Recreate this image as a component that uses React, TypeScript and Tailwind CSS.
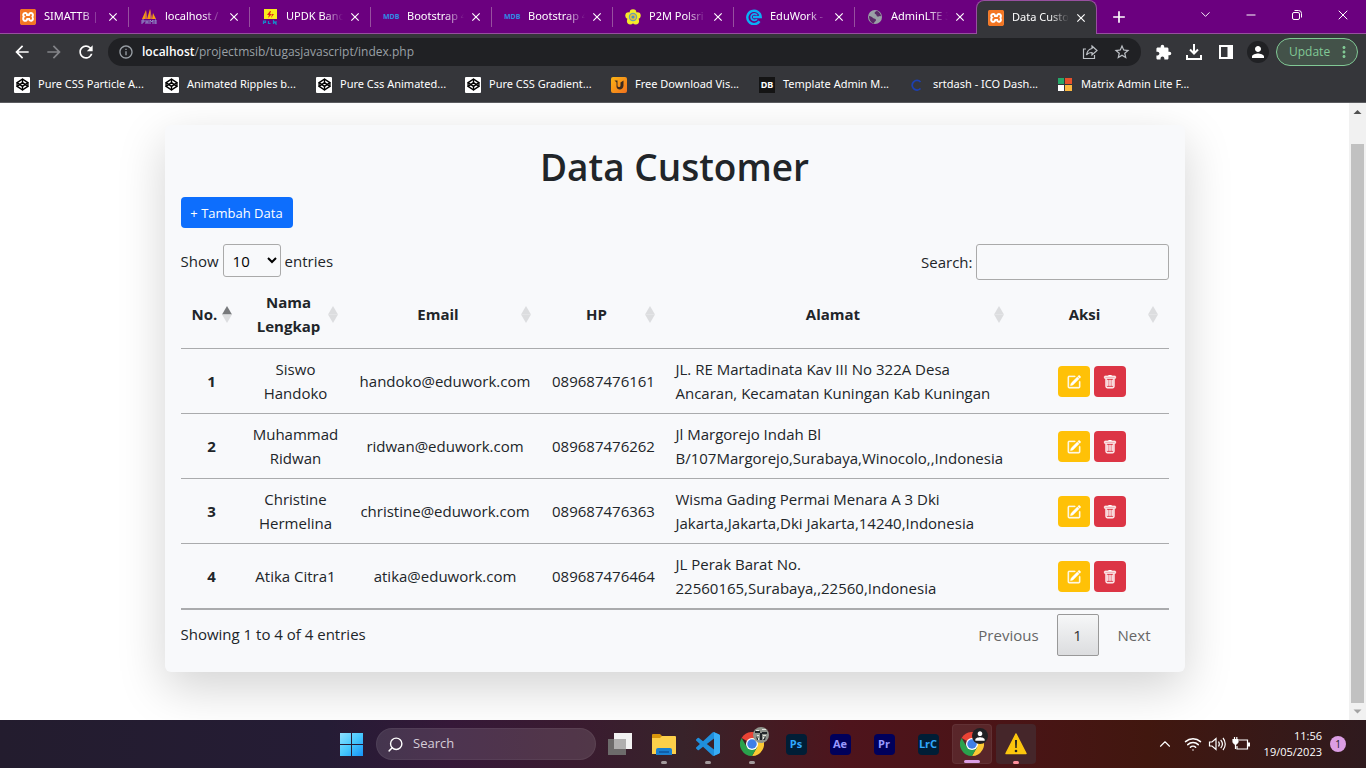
import React from "react";
import { SiXampp } from "react-icons/si";
import { FiCodepen } from "react-icons/fi";
import { BsPencilSquare, BsTrash } from "react-icons/bs";
import {
  MdArrowBack,
  MdArrowForward,
  MdRefresh,
  MdInfoOutline,
  MdStarBorder,
  MdExtension,
  MdPerson,
  MdMoreVert,
  MdClose,
  MdAdd,
} from "react-icons/md";
import { Search, ChevronDown, ChevronUp, Wifi, Minus, X } from "lucide-react";

const Xampp = () => (
  <span className="block size-4 rounded-sm bg-white">
    <SiXampp className="size-4 text-[#f37623]" />
  </span>
);

const Mdb = () => (
  <span className="block w-4 text-center text-[7px] leading-4 font-bold text-[#2f8be6]">MDB</span>
);

const PhpMyAdmin = () => (
  <svg viewBox="0 0 16 16" className="size-4">
    <path d="M1 10 5 1l1 9zM6 10 9 0l2 10zM11 10l1-6 3 6z" fill="#f89c0e" />
    <path d="M5 1l1 9H4zM9 0l2 10H9z" fill="#c9665c" />
    <path d="M1 15v-4h2v2H1m4-2v4m0-2h2m0-2v4m2 0v-4l2 2 1-2v4m2 0v-4h1v4" stroke="#8f8fc8" fill="none" />
  </svg>
);

const Pln = () => (
  <svg viewBox="0 0 16 16" className="size-4">
    <rect x="2" width="13" height="10" fill="#f8ee1c" />
    <path d="M8 2 5 6h2l-1 3 4-4H8l1-3zM11 2l-1 3h2l-3 4" fill="#e2231a" />
    <path d="M1.500 15v-3h2v1.500h-2m5-1.500v2.500h2m3 .5v-3l2.500 3v-3" stroke="#1a86c7" strokeWidth="1.200" fill="none" />
  </svg>
);

const Flower = () => (
  <svg viewBox="0 0 16 16" className="size-4">
    <g fill="#f4ea2a">
      <circle cx="8" cy="3.6" r="3.4" />
      <circle cx="12.3" cy="6.6" r="3.4" />
      <circle cx="10.7" cy="12" r="3.4" />
      <circle cx="5.3" cy="12" r="3.4" />
      <circle cx="3.7" cy="6.6" r="3.4" />
    </g>
    <circle cx="8" cy="8" r="4.2" fill="#6f9fa8" />
    <circle cx="8" cy="8" r="3" fill="#e8c23a" />
    <circle cx="8" cy="8" r="1.6" fill="#4a90c2" />
  </svg>
);

const EduWork = () => (
  <svg viewBox="0 0 16 16" className="size-4" fill="none" stroke="#0ab0f5">
    <path d="M13.500 12.300A6.700 6.700 0 1 1 14.700 8H7" strokeWidth="2.400" />
    <path d="M11 6A3.300 3.300 0 1 0 11 10.200" strokeWidth="1.800" />
  </svg>
);

const Globe = () => (
  <svg viewBox="0 0 16 16" className="size-4">
    <circle cx="8" cy="8" r="7" fill="#9aa0a6" />
    <path d="M2 7c2 0 3 1 4 2s3 .5 3 2-2 1.500-2 3.500C4 14 2 11 2 7zM8 3c-1 1 0 2 1 2.500s0 2 2 2 1.500-1 3 0C14 4 11 2 9.500 2z" fill="#5b2a68" />
  </svg>
);

const tabs = [
  { title: "SIMATTB |", Icon: Xampp },
  { title: "localhost /", Icon: PhpMyAdmin },
  { title: "UPDK Banc", Icon: Pln },
  { title: "Bootstrap 4", Icon: Mdb },
  { title: "Bootstrap 4", Icon: Mdb },
  { title: "P2M Polsri", Icon: Flower },
  { title: "EduWork -", Icon: EduWork },
  { title: "AdminLTE 3", Icon: Globe },
  { title: "Data Custo", Icon: Xampp, active: true },
];

const Codepen = () => (
  <span className="flex size-4 items-center justify-center rounded-[1px] bg-white text-black">
    <FiCodepen size={13} strokeWidth={2.5} />
  </span>
);

const UpIcon = () => (
  <svg viewBox="0 0 16 16" className="size-4">
    <defs>
      <linearGradient id="up" x1="0" y1="0" x2="1" y2="1">
        <stop stopColor="#fbb514" />
        <stop offset="1" stopColor="#f1711e" />
      </linearGradient>
    </defs>
    <rect width="16" height="16" rx="2" fill="url(#up)" />
    <path d="M3.500 3.500h3v5c0 2 3 2 3 0v-3l3-2v5c0 5-7 5-7 1v-4z" fill="#3a2a20" />
  </svg>
);

const Db = () => (
  <span className="block size-4 bg-[#141414] text-center text-[9px] leading-4 font-bold text-white">DB</span>
);

const Srt = () => (
  <svg viewBox="0 0 16 16" className="size-4" fill="none">
    <path d="M11.500 5A4.800 4.800 0 1 0 11.500 11.500" stroke="#1d40b0" strokeWidth="1.800" />
  </svg>
);

const Matrix = () => (
  <svg viewBox="0 0 16 16" className="size-4">
    <path fill="#27a768" d="M1 1h6v6H1z" />
    <path fill="#e5512b" d="M8 1h7v6H8z" />
    <path fill="#fff" d="M1 8h6v6H1z" />
    <path fill="#fcb940" d="M8 8h7v6H8z" />
  </svg>
);

const bookmarks = [
  { title: "Pure CSS Particle A...", Icon: Codepen, width: "w-[149px]" },
  { title: "Animated Ripples b...", Icon: Codepen, width: "w-[153px]" },
  { title: "Pure Css Animated...", Icon: Codepen, width: "w-[149px]" },
  { title: "Pure CSS Gradient...", Icon: Codepen, width: "w-[146px]" },
  { title: "Free Download Vis...", Icon: UpIcon, width: "w-[148px]" },
  { title: "Template Admin M...", Icon: Db, width: "w-[150px]" },
  { title: "srtdash - ICO Dash...", Icon: Srt, width: "w-[148px]" },
  { title: "Matrix Admin Lite F...", Icon: Matrix, width: "w-[150px]" },
];

function TabStrip() {
  return (
    <div className="flex h-[34px] items-stretch border-b border-[#97509f] bg-[#6b007f] pl-2">
      {tabs.map(({ title, Icon, active }, i) => (
        <div
          key={i}
          className={
            active
              ? "-mb-px flex w-[121px] items-center rounded-t-lg border border-b-0 border-[#97509f] bg-[#35363a] pl-[11px]"
              : "flex w-[121px] items-center pl-3"
          }
        >
          <Icon />
          <span className="ml-2 w-[62px] [mask-image:linear-gradient(to_right,black_60%,transparent_92%)] font-['Noto_Sans',sans-serif] text-[11px] whitespace-nowrap text-white">
            {title}
          </span>
          <button aria-label={"Close " + title} className="text-white">
            <MdClose size={14} />
          </button>
          {!active && i < 7 && <span className="ml-auto h-5 w-px bg-[#97509f]" />}
        </div>
      ))}
      <button aria-label="New tab" className="ml-3 text-white">
        <MdAdd size={20} />
      </button>
      <div className="ml-auto flex items-center pb-1 text-white">
        <button aria-label="Search tabs" className="flex w-[46px] justify-center">
          <ChevronDown size={15} strokeWidth={1.5} />
        </button>
        <button aria-label="Minimize" className="flex w-[46px] justify-center">
          <Minus size={14} strokeWidth={1.7} />
        </button>
        <button aria-label="Restore" className="flex w-[46px] justify-center">
          <svg viewBox="0 0 12 12" className="size-3" fill="none" stroke="currentColor">
            <rect x="1.500" y="3.500" width="7" height="7" rx="1.500" />
            <path d="M3.500 1.500h4a3 3 0 0 1 3 3v4" />
          </svg>
        </button>
        <button aria-label="Close window" className="flex w-[46px] justify-center">
          <X size={16} strokeWidth={1.5} />
        </button>
      </div>
    </div>
  );
}

function Toolbar() {
  return (
    <div className="flex h-9 items-center pr-2 pl-3 text-white">
      <button aria-label="Back"><MdArrowBack size={20} /></button>
      <button aria-label="Forward" className="ml-3 text-[#838488]"><MdArrowForward size={20} /></button>
      <button aria-label="Reload" className="ml-3"><MdRefresh size={20} /></button>
      <div className="ml-3 flex h-7 flex-1 items-center rounded-full bg-[#202124] px-[10px]">
        <MdInfoOutline size={16} className="text-[#9aa0a6]" />
        <a href="#" className="ml-2 flex-1 text-[12px] text-[#9aa0a6]">
          <span className="font-semibold text-white">localhost</span>/projectmsib/tugasjavascript/index.php
        </a>
        <button aria-label="Share">
          <svg viewBox="0 0 16 16" className="size-4" fill="none" stroke="#bdc1c6" strokeWidth="1.200">
            <path d="M4 5H1.500v9.500h11V11" />
            <path d="M10 2l5 4.500-5 4.500V8.500C7 8.500 5.500 9.500 4.500 11 5 7.500 7 5 10 4.500z" />
          </svg>
        </button>
        <button aria-label="Bookmark" className="ml-[15px] text-[#bdc1c6]"><MdStarBorder size={18} /></button>
      </div>
      <button aria-label="Extensions" className="ml-[14px]"><MdExtension size={17} /></button>
      <button aria-label="Downloads" className="ml-[13px]">
        <svg viewBox="0 0 18 18" className="size-[18px]" fill="none" stroke="currentColor" strokeWidth="2">
          <path d="M9 1v9M5 6.500l4 4 4-4M2 12v4h14v-4" />
        </svg>
      </button>
      <button aria-label="Side panel" className="ml-4">
        <svg viewBox="0 0 14 14" className="size-[14px]">
          <path d="M0 0h14v14H0z" fill="currentColor" />
          <path d="M2 2h6.500v10H2z" fill="#35363a" />
        </svg>
      </button>
      <button aria-label="Profile" className="ml-[14px] flex size-[22px] items-center justify-center rounded-full bg-[#202124]">
        <MdPerson size={18} />
      </button>
      <button className="ml-[7px] flex h-7 w-[82px] items-center rounded-full border border-[#81c995] bg-[#435249] pl-3 text-[12px] text-[#81c995]">
        Update
        <MdMoreVert size={18} className="mr-1 ml-auto" />
      </button>
    </div>
  );
}

function Bookmarks() {
  return (
    <nav className="flex h-8 items-center pb-[3px] pl-[14px] font-['Noto_Sans',sans-serif] text-[11px] text-white">
      {bookmarks.map(({ title, Icon, width }) => (
        <a key={title} href="#" className={"flex items-center whitespace-nowrap " + width}>
          <Icon />
          <span className="ml-2">{title}</span>
        </a>
      ))}
    </nav>
  );
}

const columns = [
  { label: "No.", width: "w-[62px]" },
  { label: "Nama Lengkap", width: "w-[106px]" },
  { label: "Email", width: "w-[193px]" },
  { label: "HP", width: "w-[124px]" },
  { label: "Alamat", width: "w-[349px]" },
  { label: "Aksi", width: "w-[154px]" },
];

const customers = [
  { name: "Siswo Handoko", email: "handoko@eduwork.com", hp: "089687476161", address: "JL. RE Martadinata Kav III No 322A Desa Ancaran, Kecamatan Kuningan Kab Kuningan" },
  { name: "Muhammad Ridwan", email: "ridwan@eduwork.com", hp: "089687476262", address: "Jl Margorejo Indah Bl B/107Margorejo,Surabaya,Winocolo,,Indonesia" },
  { name: "Christine Hermelina", email: "christine@eduwork.com", hp: "089687476363", address: "Wisma Gading Permai Menara A 3 Dki Jakarta,Jakarta,Dki Jakarta,14240,Indonesia" },
  { name: "Atika Citra1", email: "atika@eduwork.com", hp: "089687476464", address: "JL Perak Barat No. 22560165,Surabaya,,22560,Indonesia" },
];

function SortMark({ sorted }: { sorted: boolean }) {
  return (
    <svg viewBox="0 0 10 17" className="mt-[2px] h-[17px] w-[10px] shrink-0">
      <path d="M5 0l5 8.500H0z" fill={sorted ? "#77797b" : "#dcdddf"} />
      <path d="M0 8.500h10L5 17z" fill="#dcdddf" />
    </svg>
  );
}

function CustomerTable() {
  return (
    <table className="w-full table-fixed border-b-2 border-[#aaabad] text-center">
      <thead>
        <tr className="border-b border-[#aaabad]">
          {columns.map(({ label, width }, i) => (
            <th key={label} className={"h-[68px] pr-[11px] pl-[10px] font-bold " + width}>
              <span className="flex items-center gap-[3px]">
                <span className="flex-1">{label}</span>
                <SortMark sorted={i === 0} />
              </span>
            </th>
          ))}
        </tr>
      </thead>
      <tbody>
        {customers.map((c, i) => (
          <tr key={c.hp} className="border-b border-[#aaabad] last:border-b-0">
            <th className="p-2 font-bold">{i + 1}</th>
            <td className="p-2">{c.name}</td>
            <td className="p-2">{c.email}</td>
            <td className="p-2">{c.hp}</td>
            <td className="py-2 pr-2 pl-[10px] text-left">{c.address}</td>
            <td className="px-2 pt-[10px] pb-2">
              <div className="flex justify-center gap-1 text-white">
                <button aria-label={"Edit " + c.name} className="flex h-[31px] w-8 items-center justify-center rounded bg-[#ffc107]">
                  <BsPencilSquare size={14} stroke="currentColor" strokeWidth={0.6} />
                </button>
                <button aria-label={"Delete " + c.name} className="flex h-[31px] w-8 items-center justify-center rounded bg-[#dc3545]">
                  <BsTrash size={14} stroke="currentColor" strokeWidth={0.6} />
                </button>
              </div>
            </td>
          </tr>
        ))}
      </tbody>
    </table>
  );
}

function Page() {
  return (
    <main className="min-w-0 flex-1 overflow-hidden px-4 pt-[22px]">
      <section className="mx-auto max-w-[1020px] rounded-md bg-[#f8f9fb] p-4 text-[15px] leading-6 text-[#212529] shadow-[0_16px_48px_rgba(0,0,0,0.175)]">
        <h1 className="pt-[2px] pb-[6px] text-center text-[37px] leading-[48px] font-semibold">Data Customer</h1>
        <button className="h-[31px] w-28 rounded bg-[#0d6efd] text-[13px] leading-5 text-white">+ Tambah Data</button>
        <div className="mt-4 flex items-start justify-between">
          <label className="flex items-center gap-1">
            Show
            <select className="h-[33px] w-[58px] rounded-[3px] border border-[#aaa] pl-[5px] text-[15px] text-black">
              <option>10</option>
            </select>
            entries
          </label>
          <label className="flex items-center gap-[3px]">
            Search:
            <input type="search" className="h-9 w-[193px] rounded-[3px] border border-[#aaa] px-1" />
          </label>
        </div>
        <CustomerTable />
        <div className="flex items-start justify-between pt-1">
          <p className="pt-2">Showing 1 to 4 of 4 entries</p>
          <div className="flex h-[42px] items-center text-[#666]">
            <button className="pr-[18px] pl-[19px]">Previous</button>
            <button className="size-[42px] rounded-xs border border-[#999] bg-linear-to-b from-[#f6f7f8] to-[#dcdddf] text-[#333]">1</button>
            <button className="pr-[18px] pl-[19px]">Next</button>
          </div>
        </div>
      </section>
    </main>
  );
}

function ScrollBar() {
  return (
    <div className="flex w-[17px] flex-col items-center bg-[#f1f1f1] px-[2px]">
      <svg viewBox="0 0 17 17" className="size-[17px] shrink-0"><path d="M4.500 11h8l-4-4z" fill="#505050" /></svg>
      <div className="mt-6 w-full flex-1 bg-[#c1c1c1]" />
      <svg viewBox="0 0 17 17" className="size-[17px] shrink-0"><path d="M4.500 6.500h8l-4 4z" fill="#a3a3a3" /></svg>
    </div>
  );
}

const Chrome = () => (
  <svg viewBox="0 0 48 48" className="size-6">
    <path d="M3.200 12A24 24 0 0 1 44.800 12H24v12z" fill="#ea4335" />
    <path d="M44.800 12A24 24 0 0 1 24 48l10.400-18L24 12z" fill="#fcc934" />
    <path d="M3.200 12A24 24 0 0 0 24 48l10.400-18H13.600z" fill="#2aa14c" />
    <circle cx="24" cy="24" r="12" fill="#fff" />
    <circle cx="24" cy="24" r="9.500" fill="#3f7fe8" />
  </svg>
);

const Adobe = ({ text, tone }: { text: string; tone: string }) => (
  <span className={"flex size-[21px] items-center justify-center rounded text-[11px] font-bold " + tone}>{text}</span>
);

const Folder = () => (
  <svg viewBox="0 0 24 24" className="size-6">
    <path d="M0 3a1 1 0 0 1 1-1h7l2 2v3H0z" fill="#d9960c" />
    <path d="M0 6h8l2-2h13a1 1 0 0 1 1 1v17H0z" fill="#fcd04a" />
    <path d="M4 23v-5a2 2 0 0 1 2-2h12a2 2 0 0 1 2 2v5z" fill="#1980d0" />
    <path d="M7 19h10v2H7z" fill="#0f5ea8" />
  </svg>
);

const VsCode = () => (
  <svg viewBox="0 0 24 24" className="size-6">
    <path
      fill="#1f8fdc"
      d="M23.15 2.587L18.21.21a1.494 1.494 0 0 0-1.705.29l-9.46 8.63-4.12-3.128a.999.999 0 0 0-1.276.057L.327 7.261A1 1 0 0 0 .326 8.74L3.899 12 .326 15.26a1 1 0 0 0 .001 1.479L1.65 17.94a.999.999 0 0 0 1.276.057l4.12-3.128 9.46 8.63a1.492 1.492 0 0 0 1.704.29l4.942-2.377A1.5 1.5 0 0 0 24 20.06V3.939a1.5 1.5 0 0 0-.85-1.352zm-5.146 14.861L10.826 12l7.178-5.448v10.896z"
    />
    <path fill="#38adf5" d="M18 .2l5.150 2.387A1.500 1.500 0 0 1 24 3.940v16.120a1.500 1.500 0 0 1-.850 1.350L18 23.800z" />
  </svg>
);

const Warning = () => (
  <svg viewBox="0 0 24 24" className="size-6">
    <path d="M12 2 2 21.500h20z" fill="#fcc60e" stroke="#fcc60e" strokeWidth="1.500" strokeLinejoin="round" />
    <path d="M11 8h2l-.3 8h-1.400z" fill="#222" />
    <circle cx="12" cy="19" r="1.300" fill="#222" />
  </svg>
);

const TaskView = () => (
  <svg viewBox="0 0 24 24" className="size-6">
    <path d="M6 1h18v16H6z" fill="#f2f2f2" />
    <path d="M0 7h18v16H0z" fill="#6d6b6b" />
    <path d="M6 7h12v10H6z" fill="#b0afaf" />
  </svg>
);

const PersonBadge = () => (
  <span className="absolute top-[3px] right-[3px] flex size-4 items-center justify-center rounded-full bg-[#202124] text-white">
    <MdPerson size={14} />
  </span>
);

const PhotoBadge = () => (
  <svg viewBox="0 0 16 16" className="absolute top-[3px] right-[3px] size-4">
    <circle cx="8" cy="8" r="8" fill="#8f948c" />
    <path d="M2 4h5v2H2zM9 5h5v2H9zM7 6h2v7H7zM3 9l3 4H4zM13 9l-3 4h2z" fill="#22272a" />
    <path d="M3 3h3v1H3zM9 2h4v1H9zM4 8h2v1H4zM10 8h3v1h-3zM5 11h1v2H5zM10 10h1v2h-1z" fill="#e4e6e0" />
  </svg>
);

const apps = [
  { name: "Task view", icon: <TaskView />, mark: "", frame: "" },
  { name: "File Explorer", icon: <Folder />, mark: "w-[6px] bg-[#a39a9c]", frame: "" },
  { name: "Visual Studio Code", icon: <VsCode />, mark: "w-[6px] bg-[#a39a9c]", frame: "" },
  { name: "Chrome", icon: <><Chrome /><PhotoBadge /></>, mark: "w-[6px] bg-[#a39a9c]", frame: "" },
  { name: "Photoshop", icon: <Adobe text="Ps" tone="bg-[#001e36] text-[#31a8ff]" />, mark: "", frame: "" },
  { name: "After Effects", icon: <Adobe text="Ae" tone="bg-[#00005b] text-[#9999ff]" />, mark: "", frame: "" },
  { name: "Premiere", icon: <Adobe text="Pr" tone="bg-[#00005b] text-[#9999ff]" />, mark: "", frame: "" },
  { name: "Lightroom Classic", icon: <Adobe text="LrC" tone="bg-[#001e36] text-[#31a8ff]" />, mark: "", frame: "" },
  { name: "Chrome profile", icon: <><Chrome /><PersonBadge /></>, mark: "w-4 bg-[#dc9ee4]", frame: "bg-white/8 border border-white/5" },
  { name: "XAMPP alert", icon: <Warning />, mark: "w-[6px] bg-[#ff8f9c]", frame: "bg-[#45262a]" },
];

function Taskbar() {
  return (
    <footer className="grid h-12 grid-cols-[1fr_auto_1fr] items-center bg-[linear-gradient(to_right,#231c2e_0%,#251c35_24%,#351838_33%,#3a1b30_42%,#38232a_50%,#4e141c_62%,#4a1416_74%,#41170f_84%,#2f1a1e_100%)] text-white">
      <span />
      <div className="flex items-center pl-[10px]">
        <button aria-label="Start" className="mr-[13px]">
          <svg viewBox="0 0 23 23" className="size-[23px]">
            <defs>
              <linearGradient id="win" x1="0" y1="0" x2="1" y2="1">
                <stop stopColor="#8fe0fd" />
                <stop offset="0.5" stopColor="#47c8fd" />
                <stop offset="1" stopColor="#1593f8" />
              </linearGradient>
            </defs>
            <path d="M0 0h11v11H0zM12 0h11v11H12zM0 12h11v11H0zM12 12h11v11H12z" fill="url(#win)" />
          </svg>
        </button>
        <button className="mr-1 flex h-8 w-[220px] items-center rounded-full border border-white/5 bg-white/12 pl-[10px] text-[13px] text-[#d5cdd8]">
          <Search size={17} className="mr-[9px] -scale-x-100 text-white" />
          Search
        </button>
        <div className="flex gap-1">
          {apps.map((a) => (
            <button key={a.name} aria-label={a.name} className={"relative flex size-10 items-center justify-center rounded " + a.frame}>
              {a.icon}
              {a.mark && <span className={"absolute bottom-0 h-[3px] rounded-full " + a.mark} />}
            </button>
          ))}
        </div>
      </div>
      <div className="flex items-center justify-end pr-5">
        <ChevronUp size={18} strokeWidth={1.5} className="mr-[10px]" />
        <Wifi size={18} className="mr-[6px]" />
        <svg viewBox="0 0 18 18" className="mr-[6px] size-[18px]" fill="none" stroke="currentColor" strokeWidth="1.200">
          <path d="M1.500 7v4H4l4 3.500v-11L4 7z" />
          <path d="M10.500 6.500c1 1.500 1 3.500 0 5M12.700 4.800c2 2.500 2 6 0 8.400M15 3c3 3.500 3 8.500 0 12" />
        </svg>
        <svg viewBox="0 0 18 18" className="mr-[14px] size-[18px]" fill="none" stroke="currentColor" strokeWidth="1.200">
          <path d="M7 5h8.500v9H5v-3" />
          <path d="M16 8h1.500v3H16zM1 4.500h5v2.500L4.500 9h-2L1 7z" fill="currentColor" />
          <path d="M2.500 2v2.500M4.800 2v2.500M3.500 9v5" />
        </svg>
        <div className="text-right text-[11px] leading-4">
          11:56
          <br />
          19/05/2023
        </div>
        <span className="ml-2 size-4 rounded-full bg-[#dc9ee4] text-center text-[10px] leading-4 text-[#222]">1</span>
      </div>
    </footer>
  );
}

export default function App() {
  return (
    <div className="flex h-screen flex-col overflow-hidden bg-white font-['Open_Sans','Noto_Sans',sans-serif]">
      <header className="border-b border-[#5b5c60] bg-[#35363a]">
        <TabStrip />
        <Toolbar />
        <Bookmarks />
      </header>
      <div className="flex min-h-0 flex-1">
        <Page />
        <ScrollBar />
      </div>
      <Taskbar />
    </div>
  );
}
